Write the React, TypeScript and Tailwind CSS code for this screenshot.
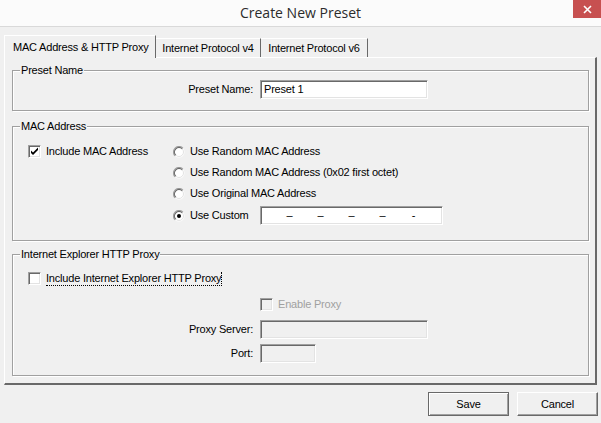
import { ReactNode } from 'react';

const sunken =
  'border border-[#a0a0a0] border-b-white border-r-white shadow-[inset_1px_1px_0_#696969,inset_-1px_-1px_0_#e3e3e3]';

const CheckBox = ({ checked = false, disabled = false }: { checked?: boolean; disabled?: boolean }) => (
  <div className={`w-[13px] h-[13px] shrink-0 ${sunken} ${disabled ? 'bg-[#f0f0f0]' : 'bg-white'}`}>
    {checked && (
      <svg width="11" height="11" viewBox="0 0 11 11">
        <path d="M2 4.5v2.5l2 2 5-5V1.5l-5 5z" fill="#000" />
      </svg>
    )}
  </div>
);

// classic sunken radio button
const Radio = ({ checked = false }: { checked?: boolean }) => (
  <svg width="12" height="12" viewBox="0 0 12 12" className="shrink-0">
    <circle cx="6" cy="6" r="5.5" fill="#fff" />
    <path d="M2.1 9.9A5.5 5.5 0 0 1 9.9 2.1" stroke="#a0a0a0" strokeWidth="1.2" fill="none" />
    <path d="M2.8 9.2A4.5 4.5 0 0 1 9.2 2.8" stroke="#696969" strokeWidth="1.2" fill="none" />
    <path d="M9.2 2.8A4.5 4.5 0 0 1 2.8 9.2" stroke="#e3e3e3" strokeWidth="1" fill="none" />
    {checked && <circle cx="6" cy="6" r="2" fill="#000" />}
  </svg>
);

const Group = ({ title, className, children }: { title: string; className: string; children: ReactNode }) => (
  <div
    className={`relative border border-[#a0a0a0] shadow-[inset_1px_1px_0_#fff,1px_1px_0_#fff] ${className}`}
  >
    <span className="absolute left-[7px] top-[-8px] bg-[#f0f0f0] px-[1px] leading-[14px]">{title}</span>
    {children}
  </div>
);

const Label = ({ children }: { children: ReactNode }) => (
  <div className="w-[240px] text-right shrink-0">{children}</div>
);

const App = () => {
  return (
    <div className="w-[601px] h-[423px] bg-[#f0f0f0] overflow-hidden font-['Liberation_Sans',Arial,sans-serif] text-[11px] tracking-[-0.2px] text-black">
      {/* title bar */}
      <div className="relative h-[27px] bg-[#fbfbfb] border-b border-[#d9d9d9] flex items-center justify-center">
        <span className="font-['Open_Sans',sans-serif] text-[14px] tracking-normal text-[#2b2b2b] leading-none">Create New Preset</span>
        <div className="absolute right-0 top-0 w-[28px] h-[18px] bg-[#c75050] flex items-center justify-center">
          <svg width="9" height="9" viewBox="0 0 9 9">
            <path d="M1 1l7 7M8 1l-7 7" stroke="#fff" strokeWidth="1.6" />
          </svg>
        </div>
      </div>

      <div className="pt-[8px] pl-[4px]">
        {/* tabs */}
        <div className="flex items-end h-[22px]">
          <div className="relative z-10 -mb-px h-[23px] w-[152px] bg-[#f0f0f0] border-l border-t border-white border-r border-r-[#696969] pl-[8px] flex items-center">
            MAC Address &amp; HTTP Proxy
          </div>
          <div className="h-[19px] w-[105px] border-t border-white border-r border-r-[#696969] flex items-center justify-center">
            Internet Protocol v4
          </div>
          <div className="h-[19px] w-[107px] border-t border-white border-r border-r-[#696969] flex items-center justify-center">
            Internet Protocol v6
          </div>
        </div>

        {/* panel */}
        <div className="w-[593px] h-[328px] border-l border-t border-white border-r-2 border-b-2 border-r-[#696969] border-b-[#696969] pl-[7px] pr-[6px] pt-[12px]">
          <Group title="Preset Name" className="h-[41px] pt-[9px]">
            <div className="flex items-center h-[19px]">
              <Label>Preset Name:</Label>
              <div className={`ml-[7px] w-[168px] h-[19px] bg-white ${sunken} flex items-center pl-[3px]`}>Preset 1</div>
            </div>
          </Group>

          <Group title="MAC Address" className="mt-[15px] h-[115px] pt-[14px] flex">
            <div className="w-[160px] pl-[15px] shrink-0">
              <div className="h-[21px] flex items-center gap-[5px]">
                <CheckBox checked />
                <span>Include MAC Address</span>
              </div>
            </div>
            <div className="flex flex-col">
              <div className="h-[21px] flex items-center gap-[5px]">
                <Radio />
                <span>Use Random MAC Address</span>
              </div>
              <div className="h-[21px] flex items-center gap-[5px]">
                <Radio />
                <span>Use Random MAC Address (0x02 first octet)</span>
              </div>
              <div className="h-[21px] flex items-center gap-[5px]">
                <Radio />
                <span>Use Original MAC Address</span>
              </div>
              <div className="h-[23px] flex items-center gap-[5px]">
                <Radio checked />
                <span className="w-[65px]">Use Custom</span>
                <div className={`w-[183px] h-[19px] bg-white ${sunken} flex items-center pl-[13px]`}>
                  <span className="w-[31px] text-center">–</span>
                  <span className="w-[31px] text-center">–</span>
                  <span className="w-[31px] text-center">–</span>
                  <span className="w-[31px] text-center">–</span>
                  <span className="w-[31px] text-center">-</span>
                </div>
              </div>
            </div>
          </Group>

          <Group title="Internet Explorer HTTP Proxy" className="mt-[13px] h-[122px] pt-[13px]">
            <div className="h-[21px] flex items-center gap-[5px] pl-[15px]">
              <CheckBox />
              <span className="border-b border-r border-dotted border-black leading-[13px]">
                Include Internet Explorer HTTP Proxy
              </span>
            </div>
            <div className="mt-[5px] h-[21px] flex items-center">
              <div className="w-[247px] shrink-0" />
              <div className="flex items-center gap-[5px]">
                <CheckBox disabled />
                <span className="text-[#a0a0a0]">Enable Proxy</span>
              </div>
            </div>
            <div className="mt-[5px] h-[19px] flex items-center">
              <Label>Proxy Server:</Label>
              <div className={`ml-[7px] w-[168px] h-[19px] ${sunken}`} />
            </div>
            <div className="mt-[5px] h-[19px] flex items-center">
              <Label>Port:</Label>
              <div className={`ml-[7px] w-[56px] h-[19px] ${sunken}`} />
            </div>
          </Group>
        </div>
      </div>

      {/* buttons */}
      <div className="mt-[7px] pr-[3px] flex justify-end gap-[8px]">
        <button className="w-[81px] h-[24px] bg-[#f0f0f0] border border-[#696969] shadow-[inset_1px_1px_0_#fff,inset_-1px_-1px_0_#a0a0a0]">
          Save
        </button>
        <button className="w-[81px] h-[24px] bg-[#f0f0f0] border border-t-[#fff] border-l-[#fff] border-r-[#696969] border-b-[#696969] shadow-[inset_-1px_-1px_0_#a0a0a0]">
          Cancel
        </button>
      </div>
    </div>
  );
};

export default App;
